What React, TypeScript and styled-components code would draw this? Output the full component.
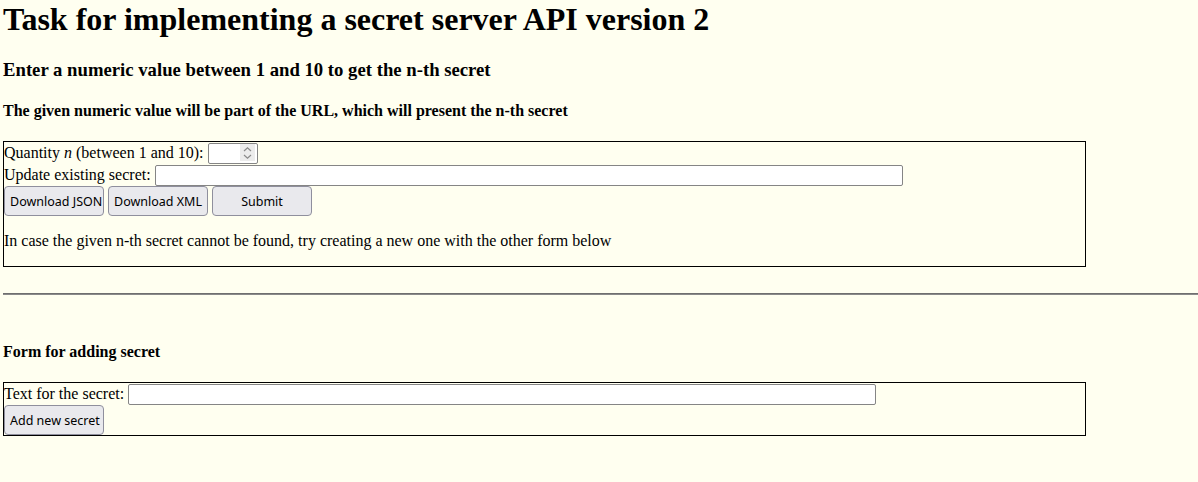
import styled, { createGlobalStyle, css } from 'styled-components';

const GlobalStyle = createGlobalStyle`
  html, body {
    margin: 0;
    padding: 0;
    background-color: #fffff0;
  }

  body {
    font-family: 'Liberation Serif', 'Times New Roman', serif;
    font-size: 16px;
    color: #000;
  }

  input[type='number']::-webkit-inner-spin-button,
  input[type='number']::-webkit-outer-spin-button {
    -webkit-appearance: none;
    margin: 0;
  }
`;

const Page = styled.main`
  padding: 1px 0 0 3px;
`;

const Title = styled.h1`
  margin: 0 0 21px;
  font-size: 32px;
  font-weight: bold;
  line-height: 37px;
`;

const SubTitle = styled.h3`
  margin: 21px 0;
  font-size: 18.72px;
  font-weight: bold;
`;

const SectionTitle = styled.h4<{ $spaced?: boolean }>`
  margin: ${({ $spaced }) => ($spaced ? '48px' : '21px')} 0 21px;
  font-size: 16px;
  font-weight: bold;
`;

const FormBox = styled.form`
  width: 1081px;
  border: 1px solid #000;
`;

const Row = styled.div`
  height: 22px;
  line-height: 22px;
  white-space: nowrap;
`;

const fieldBase = css`
  box-sizing: border-box;
  height: 21px;
  padding: 1px 2px;
  border: 1px solid #858585;
  border-radius: 2px;
  background: #fff;
  font-family: 'Noto Sans', Arial, sans-serif;
  font-size: 13.33px;
  vertical-align: baseline;
  outline: none;
`;

const NumberField = styled.span`
  position: relative;
  display: inline-block;
`;

const NumberInput = styled.input`
  ${fieldBase}
  width: 50px;
  padding-right: 20px;
`;

const Spinner = styled.span`
  position: absolute;
  top: 2px;
  right: 3px;
  display: flex;
  align-items: center;
  justify-content: center;
  width: 15px;
  height: 17px;
  background-color: #ececec;
  pointer-events: none;
`;

const SecretInput = styled.input`
  ${fieldBase}
  width: 748px;
`;

const ButtonRow = styled.div`
  display: flex;
  gap: 4px;
`;

const Button = styled.button`
  box-sizing: border-box;
  width: 100px;
  height: 30px;
  padding: 1px 5px;
  border: 1px solid #8f8f9d;
  border-radius: 4px;
  background-color: #e9e9ed;
  color: #000;
  font-family: 'Noto Sans', 'Open Sans', Arial, sans-serif;
  font-size: 12.5px;
  white-space: nowrap;
  overflow: hidden;
`;

const Note = styled.p`
  margin: 16px 0;
`;

const Divider = styled.hr`
  height: 0;
  margin: 26px 0 8px;
  border: none;
  border-top: 1px solid #6f6f6f;
  border-bottom: 1px solid #8a8a8a;
`;

export default function App() {
  return (
    <>
      <GlobalStyle />
      <Page>
        <Title>Task for implementing a secret server API version 2</Title>
        <SubTitle>Enter a numeric value between 1 and 10 to get the n-th secret</SubTitle>
        <SectionTitle>The given numeric value will be part of the URL, which will present the n-th secret</SectionTitle>

        <FormBox onSubmit={(e) => e.preventDefault()}>
          <Row>
            Quantity <i>n</i> (between 1 and 10):{' '}
            <NumberField>
              <NumberInput type="number" min={1} max={10} />
              <Spinner aria-hidden="true">
                <svg width="9" height="14" viewBox="0 0 9 14" fill="none" stroke="#8a8a8a" strokeWidth="1.2">
                  <path d="M1 5 L4.5 1.8 L8 5" />
                  <path d="M1 9 L4.5 12.2 L8 9" />
                </svg>
              </Spinner>
            </NumberField>
          </Row>
          <Row>
            Update existing secret: <SecretInput type="text" />
          </Row>
          <ButtonRow>
            <Button type="button">Download JSON</Button>
            <Button type="button">Download XML</Button>
            <Button type="submit">Submit</Button>
          </ButtonRow>
          <Note>In case the given n-th secret cannot be found, try creating a new one with the other form below</Note>
        </FormBox>

        <Divider />

        <SectionTitle $spaced>Form for adding secret</SectionTitle>

        <FormBox onSubmit={(e) => e.preventDefault()}>
          <Row>
            Text for the secret: <SecretInput type="text" />
          </Row>
          <ButtonRow>
            <Button type="submit">Add new secret</Button>
          </ButtonRow>
        </FormBox>
      </Page>
    </>
  );
}
